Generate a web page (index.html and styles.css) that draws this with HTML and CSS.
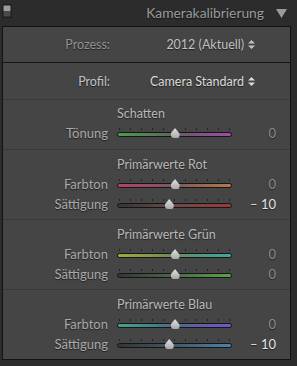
FILE: index.html
```html
<!DOCTYPE html>
<html>
<head>
    <title>Kamerakalibrierung</title>
    <link rel="stylesheet" href="styles.css">
</head>
<body>
    <div class="header">
        <svg class="solo" width="10" height="14" viewBox="0 0 10 14">
            <rect x="0.5" y="0.5" width="9" height="13" fill="#1c1c1c" stroke="#202020"/>
            <rect x="1.5" y="1.5" width="7" height="5.5" fill="#9c9c9c"/>
            <rect x="1.5" y="7" width="7" height="5.5" fill="#4a4a4a"/>
        </svg>
        <span class="title">Kamerakalibrierung</span>
        <svg class="collapse" width="11" height="9" viewBox="0 0 11 9">
            <path d="M0 0 H11 L5.5 9 Z" fill="#9a9a9a"/>
        </svg>
    </div>

    <div class="panel">
        <div class="select-row process">
            <span class="select-label">Prozess:</span>
            <span class="select-value">2012 (Aktuell)
                <svg width="7" height="9" viewBox="0 0 7 9"><path d="M3.5 0 L7 3.5 H0 Z M0 5.5 H7 L3.5 9 Z" fill="currentColor"/></svg>
            </span>
        </div>
        <div class="select-row profile">
            <span class="select-label">Profil:</span>
            <span class="select-value">Camera Standard
                <svg width="7" height="9" viewBox="0 0 7 9"><path d="M3.5 0 L7 3.5 H0 Z M0 5.5 H7 L3.5 9 Z" fill="currentColor"/></svg>
            </span>
        </div>

        <div class="group first">
            <div class="group-title">Schatten</div>
            <div class="slider-row">
                <span class="slider-label">Tönung</span>
                <div class="slider"><div class="track tint"></div><div class="thumb" style="left: 50%"></div></div>
                <span class="slider-value">0</span>
            </div>
        </div>

        <div class="group">
            <div class="group-title">Primärwerte Rot</div>
            <div class="slider-row">
                <span class="slider-label">Farbton</span>
                <div class="slider"><div class="track red-hue"></div><div class="thumb" style="left: 50%"></div></div>
                <span class="slider-value">0</span>
            </div>
            <div class="slider-row">
                <span class="slider-label">Sättigung</span>
                <div class="slider"><div class="track red-sat"></div><div class="thumb" style="left: 45%"></div></div>
                <span class="slider-value changed">&ndash; 10</span>
            </div>
        </div>

        <div class="group">
            <div class="group-title">Primärwerte Grün</div>
            <div class="slider-row">
                <span class="slider-label">Farbton</span>
                <div class="slider"><div class="track green-hue"></div><div class="thumb" style="left: 50%"></div></div>
                <span class="slider-value">0</span>
            </div>
            <div class="slider-row">
                <span class="slider-label">Sättigung</span>
                <div class="slider"><div class="track green-sat"></div><div class="thumb" style="left: 50%"></div></div>
                <span class="slider-value">0</span>
            </div>
        </div>

        <div class="group">
            <div class="group-title">Primärwerte Blau</div>
            <div class="slider-row">
                <span class="slider-label">Farbton</span>
                <div class="slider"><div class="track blue-hue"></div><div class="thumb" style="left: 50%"></div></div>
                <span class="slider-value">0</span>
            </div>
            <div class="slider-row">
                <span class="slider-label">Sättigung</span>
                <div class="slider"><div class="track blue-sat"></div><div class="thumb" style="left: 45%"></div></div>
                <span class="slider-value changed">&ndash; 10</span>
            </div>
        </div>
    </div>
</body>
</html>
```

FILE: styles.css
```css
body {
    margin: 0;
    width: 297px;
    height: 366px;
    overflow: hidden;
    background-color: #2c2c2c;
    font-family: Lato, "Open Sans", sans-serif;
    font-size: 12.5px;
    color: #ababab;
}
.header {
    height: 26px;
    display: flex;
    align-items: flex-start;
}
.solo {
    margin: 4px 0 0 2px;
}
.title {
    margin: 3px 0 0 auto;
    font-size: 13.8px;
    line-height: 20px;
    color: #9c9c9c;
    text-shadow: 0 1px 1px rgba(0,0,0,0.6);
}
.collapse {
    margin: 9px 10px 0 12px;
}
.panel {
    margin: 0 6px 0 2px;
    background-color: #454545;
    border: 1px solid #131313;
    text-shadow: 0 1px 1px rgba(0,0,0,0.55);
}
.select-row {
    display: grid;
    grid-template-columns: 107px 1fr;
    align-items: center;
}
.select-row.process {
    height: 35px;
    border-bottom: 1px solid #151515;
}
.select-row.profile {
    height: 36px;
}
.select-label {
    text-align: right;
}
.process .select-label {
    color: #929292;
}
.profile .select-label {
    color: #c4c4c4;
}
.select-value {
    justify-self: end;
    margin-right: 35px;
    display: flex;
    align-items: center;
    gap: 4px;
    color: #c2c2c2;
}
.profile .select-value {
    color: #dadada;
}
.group {
    border-top: 1px solid #393939;
    padding: 6px 0 5px;
}
.group.first {
    padding: 5px 0 6px;
}
.group-title {
    height: 18px;
    line-height: 18px;
    padding-left: 114px;
    color: #b9b9b9;
}
.slider-row {
    height: 20px;
    display: grid;
    grid-template-columns: 105px 115px 1fr;
    column-gap: 9px;
    align-items: center;
    padding-right: 14px;
    font-size: 13px;
}
.slider-label {
    text-align: right;
    color: #a9a9a9;
}
.slider-value {
    text-align: right;
    color: #8c8c8c;
}
.slider-value.changed {
    color: #e4e4e4;
}
.slider {
    position: relative;
    height: 20px;
}
.slider::before {
    content: "";
    position: absolute;
    left: 2px;
    width: 111px;
    top: 5px;
    height: 2px;
    background: repeating-linear-gradient(to right, #222222 0 1px, transparent 1px 11px);
}
.track {
    position: absolute;
    left: 0;
    right: 0;
    top: 9px;
    height: 3px;
    border: 1px solid #151515;
    border-radius: 3px;
}
.thumb {
    position: absolute;
    top: 5px;
    width: 9px;
    height: 10px;
    margin-left: -4px;
    background: linear-gradient(#e2e2e2, #a8a8a8);
    clip-path: polygon(50% 0, 100% 55%, 100% 100%, 0 100%, 0 55%);
    border-radius: 0 0 3px 3px;
}
.tint {
    background: linear-gradient(to right, #4e9a4e, #5a6a5a 48%, #6a5a6a 52%, #a24aa8);
}
.red-hue {
    background: linear-gradient(to right, #b4406e, #7a5a5a 50%, #b6784a);
}
.red-sat {
    background: linear-gradient(to right, #353535, #6a4a4a 50%, #9e3838);
}
.green-hue {
    background: linear-gradient(to right, #a4a83a, #6a8a5a 50%, #3aa8a0);
}
.green-sat {
    background: linear-gradient(to right, #353535, #4a6a4a 50%, #5aa04a);
}
.blue-hue {
    background: linear-gradient(to right, #3ea48a, #4a6a8a 50%, #7a52c8);
}
.blue-sat {
    background: linear-gradient(to right, #353535, #405a6a 50%, #4a82a8);
}
```
